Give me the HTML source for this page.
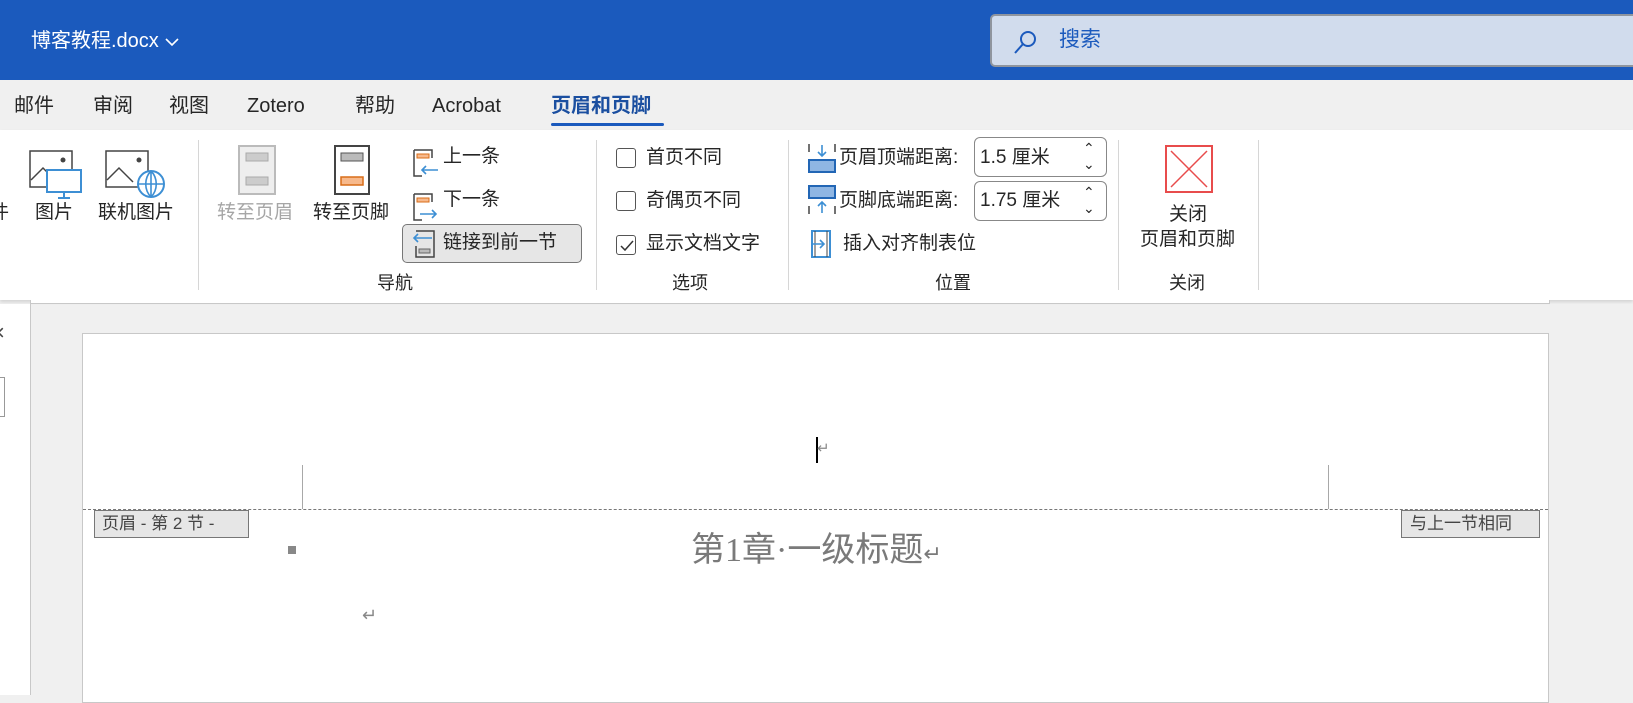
<!DOCTYPE html><html><head><meta charset="utf-8"><style>
*{margin:0;padding:0;box-sizing:border-box}
body{width:1633px;height:695px;overflow:hidden;position:relative;background:#f0f0f0;font-family:"Liberation Sans","Noto Sans CJK SC",sans-serif;color:#262626}
.a{position:absolute;white-space:nowrap;line-height:26px}
.t{font-size:19px}
.sep{position:absolute;width:1px;background:#d6d6d6;top:140px;height:150px}
.cb{position:absolute;width:20px;height:20px;border:1.5px solid #555;border-radius:3px;background:#fff}
</style></head><body>
<div class="a" style="left:0;top:0;width:1633px;height:80px;background:#1b5abd"></div>
<div class="a" style="left:31px;top:28px;color:#fff;font-size:20px">博客教程.docx <svg width="16" height="12" viewBox="0 0 16 12" style="vertical-align:middle"><path d="M2 3l6 6 6-6" stroke="#fff" stroke-width="1.6" fill="none"/></svg></div>
<div class="a" style="left:990px;top:14px;width:660px;height:53px;background:#d1dced;border:2px solid #8f959e;border-radius:5px"></div>
<svg class="a" style="left:1012px;top:28px" width="28" height="28" viewBox="0 0 28 28"><circle cx="16" cy="11" r="7" stroke="#1b5abd" stroke-width="2" fill="none"/><path d="M11 16L3 25" stroke="#1b5abd" stroke-width="2"/></svg>
<div class="a" style="left:1059px;top:27px;color:#1b5abd;font-size:21px">搜索</div>
<div class="a" style="left:0;top:80px;width:1633px;height:50px;background:#f0f0f0"></div>
<div class="a" style="left:14px;top:93px;font-size:20px">邮件</div>
<div class="a" style="left:93px;top:93px;font-size:20px">审阅</div>
<div class="a" style="left:169px;top:93px;font-size:20px">视图</div>
<div class="a" style="left:247px;top:93px;font-size:20px">Zotero</div>
<div class="a" style="left:355px;top:93px;font-size:20px">帮助</div>
<div class="a" style="left:432px;top:93px;font-size:20px">Acrobat</div>
<div class="a" style="left:551px;top:93px;font-size:20px;color:#1b4fa0;font-weight:bold">页眉和页脚</div>
<div class="a" style="left:551px;top:123px;width:113px;height:3px;background:#1b5abd;border-radius:2px"></div>
<div class="a" style="left:0;top:130px;width:1633px;height:170px;background:#fff;box-shadow:0 2px 3px rgba(0,0,0,.12)"></div>
<div class="a" style="left:30px;top:300px;width:1520px;height:4px;border:1px solid #c8c8c8;border-top:none;background:#fff"></div>
<div class="sep" style="left:198px"></div><div class="sep" style="left:596px"></div><div class="sep" style="left:788px"></div><div class="sep" style="left:1118px"></div><div class="sep" style="left:1258px"></div>
<div class="a t" style="left:-10px;top:200px">件</div>
<svg class="a" style="left:29px;top:150px" width="56" height="50"><rect x="1" y="1" width="42" height="36" fill="#fff" stroke="#444" stroke-width="1.5"/><path d="M2 30l12-12 14 14" stroke="#444" fill="none" stroke-width="1.5"/><circle cx="34" cy="10" r="2.5" fill="#444"/><rect x="18" y="20" width="34" height="22" fill="#fff" stroke="#3d8fd4" stroke-width="2"/><path d="M35 42v5M29 48h12" stroke="#3d8fd4" stroke-width="2"/></svg>
<div class="a t" style="left:35px;top:200px">图片</div>
<svg class="a" style="left:105px;top:150px" width="62" height="50"><rect x="1" y="1" width="42" height="36" fill="#fff" stroke="#444" stroke-width="1.5"/><path d="M2 30l12-12 14 14" stroke="#444" fill="none" stroke-width="1.5"/><circle cx="34" cy="10" r="2.5" fill="#444"/><circle cx="46" cy="34" r="13" fill="#fff" stroke="#3d8fd4" stroke-width="2"/><path d="M33 34h26M46 21v26M46 21c-7 7-7 19 0 26M46 21c7 7 7 19 0 26" stroke="#3d8fd4" stroke-width="1.6" fill="none"/></svg>
<div class="a t" style="left:98px;top:200px">联机图片</div>
<svg class="a" style="left:238px;top:145px" width="40" height="50"><rect x="1" y="1" width="36" height="48" fill="#eee" stroke="#bbb" stroke-width="2"/><rect x="8" y="8" width="22" height="8" fill="#ccc" stroke="#aaa"/><rect x="8" y="32" width="22" height="8" fill="#ccc" stroke="#aaa"/></svg>
<div class="a t" style="left:217px;top:200px;color:#a6a6a6">转至页眉</div>
<svg class="a" style="left:334px;top:145px" width="40" height="50"><rect x="1" y="1" width="34" height="48" fill="#fff" stroke="#444" stroke-width="2"/><rect x="7" y="8" width="22" height="8" fill="#bbb" stroke="#555"/><rect x="7" y="32" width="22" height="8" fill="#f7b98c" stroke="#d86d18" stroke-width="1.5"/></svg>
<div class="a t" style="left:313px;top:200px">转至页脚</div>
<svg class="a" style="left:410px;top:148px" width="30" height="30"><path d="M4 2h18v8M4 2v26h8" stroke="#444" fill="none" stroke-width="1.5"/><rect x="7" y="6" width="12" height="4" fill="#f7b98c" stroke="#d86d18"/><path d="M12 22h16M16 18l-4 4 4 4" stroke="#3d8fd4" fill="none" stroke-width="1.6"/></svg>
<div class="a t" style="left:443px;top:144px">上一条</div>
<svg class="a" style="left:410px;top:192px" width="30" height="30"><path d="M4 2h18v8M4 2v26h8" stroke="#444" fill="none" stroke-width="1.5"/><rect x="7" y="6" width="12" height="4" fill="#f7b98c" stroke="#d86d18"/><path d="M10 22h16M22 18l4 4-4 4" stroke="#3d8fd4" fill="none" stroke-width="1.6"/></svg>
<div class="a t" style="left:443px;top:187px">下一条</div>
<div class="a" style="left:402px;top:224px;width:180px;height:39px;background:#e6e6e6;border:1.5px solid #777;border-radius:5px"></div>
<svg class="a" style="left:410px;top:228px" width="30" height="32"><path d="M6 3h18v26H6V18" stroke="#444" fill="none" stroke-width="1.5"/><path d="M22 10H4M8 6l-4 4 4 4" stroke="#3d8fd4" fill="none" stroke-width="1.6"/><rect x="9" y="21" width="11" height="4" fill="#bbb" stroke="#666"/></svg>
<div class="a t" style="left:443px;top:230px">链接到前一节</div>
<div class="a t" style="left:377px;top:270px;font-size:18px">导航</div>
<div class="cb" style="left:616px;top:148px"></div><div class="a t" style="left:646px;top:145px">首页不同</div>
<div class="cb" style="left:616px;top:191px"></div><div class="a t" style="left:646px;top:188px">奇偶页不同</div>
<div class="cb" style="left:616px;top:235px"></div><svg class="a" style="left:620px;top:240px" width="14" height="12"><path d="M1 6l4 4 8-9" stroke="#333" fill="none" stroke-width="1.5"/></svg><div class="a t" style="left:646px;top:231px">显示文档文字</div>
<div class="a t" style="left:672px;top:270px;font-size:18px">选项</div>
<svg class="a" style="left:808px;top:143px" width="28" height="30"><path d="M1 1v8M27 1v8" stroke="#444" stroke-width="1.5"/><path d="M14 2v11M10 9l4 4 4-4" stroke="#3d8fd4" fill="none" stroke-width="1.6"/><rect x="1" y="17" width="26" height="12" fill="#8fb6e3" stroke="#2266b5" stroke-width="2"/></svg>
<div class="a t" style="left:839px;top:145px">页眉顶端距离:</div>
<div class="a" style="left:974px;top:137px;width:133px;height:40px;border:1.5px solid #888;border-radius:6px;background:#fff"></div>
<div class="a t" style="left:980px;top:145px">1.5 厘米</div>
<div class="a" style="left:1083px;top:140px;font-size:14px;line-height:16px">⌃<br>⌄</div>
<svg class="a" style="left:808px;top:185px" width="28" height="30"><rect x="1" y="1" width="26" height="12" fill="#8fb6e3" stroke="#2266b5" stroke-width="2"/><path d="M14 28V17M10 21l4-4 4 4" stroke="#3d8fd4" fill="none" stroke-width="1.6"/><path d="M1 21v8M27 21v8" stroke="#444" stroke-width="1.5"/></svg>
<div class="a t" style="left:839px;top:188px">页脚底端距离:</div>
<div class="a" style="left:974px;top:181px;width:133px;height:40px;border:1.5px solid #888;border-radius:6px;background:#fff"></div>
<div class="a t" style="left:980px;top:188px">1.75 厘米</div>
<div class="a" style="left:1083px;top:184px;font-size:14px;line-height:16px">⌃<br>⌄</div>
<svg class="a" style="left:810px;top:230px" width="24" height="28"><rect x="2" y="1" width="18" height="26" fill="#fff" stroke="#3d8fd4" stroke-width="2"/><path d="M5 1v26M17 1v26" stroke="#444"/><path d="M3 14h10M10 10l4 4-4 4" stroke="#3d8fd4" fill="none" stroke-width="1.6"/></svg>
<div class="a t" style="left:843px;top:231px">插入对齐制表位</div>
<div class="a t" style="left:935px;top:270px;font-size:18px">位置</div>
<svg class="a" style="left:1165px;top:145px" width="50" height="48"><rect x="1" y="1" width="46" height="46" fill="#fff" stroke="#e84c4c" stroke-width="2"/><path d="M6 6l36 36M42 6L6 42" stroke="#e84c4c" stroke-width="1.5"/></svg>
<div class="a t" style="left:1169px;top:202px">关闭</div>
<div class="a t" style="left:1140px;top:227px">页眉和页脚</div>
<div class="a t" style="left:1169px;top:270px;font-size:18px">关闭</div>
<div class="a" style="left:0;top:304px;width:31px;height:391px;background:#fff;border-right:1px solid #c8c8c8"></div>
<div class="a" style="left:-8px;top:320px;font-size:22px;color:#444">×</div>
<div class="a" style="left:-10px;top:377px;width:15px;height:40px;border:1.5px solid #999;background:#fff"></div>
<div class="a" style="left:82px;top:333px;width:1467px;height:370px;background:#fff;border:1px solid #c8c8c8"></div>
<div class="a" style="left:302px;top:465px;width:1px;height:44px;background:#a8a8a8"></div>
<div class="a" style="left:1328px;top:465px;width:1px;height:44px;background:#a8a8a8"></div>
<div class="a" style="left:83px;top:509px;width:1465px;border-top:1px dashed #777"></div>
<div class="a" style="left:816px;top:437px;width:1.5px;height:26px;background:#000"></div>
<div class="a" style="left:817px;top:436px;font-size:15px;color:#888">↵</div>
<div class="a" style="left:94px;top:510px;width:155px;height:28px;background:#e6e6e6;border:1px solid #777;font-size:17px;color:#444;padding:0 7px;line-height:26px">页眉 - 第 2 节 -</div>
<div class="a" style="left:1401px;top:510px;width:139px;height:28px;background:#e6e6e6;border:1px solid #777;font-size:17px;color:#444;padding:0 8px;line-height:26px">与上一节相同</div>
<div class="a" style="left:288px;top:546px;width:8px;height:8px;background:#888"></div>
<div class="a" style="left:691px;top:530px;font-size:34px;line-height:42px;color:#7a7a7a;font-family:'Liberation Serif','Noto Sans CJK SC',serif">第1章·一级标题<span style="font-size:22px">↵</span></div>
<div class="a" style="left:362px;top:602px;font-size:18px;color:#888">↵</div>
<div class="a" style="left:1550px;top:304px;width:83px;height:391px;background:#f0f0f0"></div>
</body></html>
